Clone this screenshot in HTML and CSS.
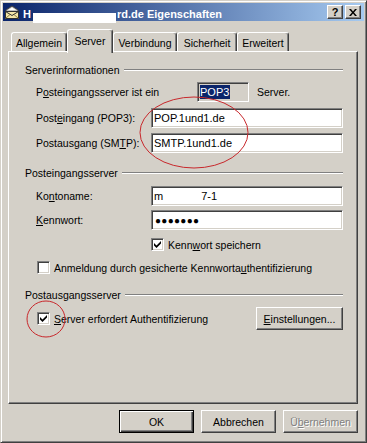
FILE: index.html
```html
<!DOCTYPE html>
<html lang="de">
<head>
<meta charset="utf-8">
<title>Eigenschaften</title>
<link rel="stylesheet" href="styles.css">
</head>
<body>
<div class="window">
  <div class="titlebar">
    <svg class="ticon" width="16" height="16" viewBox="0 0 16 16">
      <path d="M2 6 L8 2 L14 6 L14 8 L2 8 Z" fill="#c0c0c0" stroke="#404040" stroke-width="1"/>
      <path d="M4 6 L8 3.5 L12 6 Z" fill="#ffffff"/>
      <rect x="1.5" y="7.5" width="13" height="7" fill="#f4e7a8" stroke="#303030"/>
      <path d="M1.5 7.5 L8 11.5 L14.5 7.5" fill="none" stroke="#303030"/>
      <path d="M1.5 14.5 L6 10.5 M14.5 14.5 L10 10.5" fill="none" stroke="#8a7a40"/>
    </svg>
    <span class="title">H<span class="redact"></span>rd.de Eigenschaften</span>
    <div class="tbtns">
      <span class="tbtn help">?</span>
      <span class="tbtn close">
        <svg width="8" height="7" viewBox="0 0 8 7"><path d="M0 0h2l2 2.5L6 0h2L5 3.5 8 7H6L4 4.5 2 7H0l3-3.5z" fill="#000"/></svg>
      </span>
    </div>
  </div>

  <div class="tabs">
    <div class="tab w-allg">Allgemein</div>
    <div class="tab sel w-serv">Server</div>
    <div class="tab w-verb">Verbindung</div>
    <div class="tab w-sich">Sicherheit</div>
    <div class="tab w-erw">Erweitert</div>
  </div>

  <div class="panel">
    <div class="legend"><span>Serverinformationen</span><span class="rule"></span></div>
    <div class="row r1">
      <span class="lbl wide">P<u>o</u>steingangsserver ist ein</span>
      <span class="rofield"><span class="selected">POP3</span></span>
      <span class="after">Server.</span>
    </div>
    <div class="row r2">
      <span class="lbl">Post<u>e</u>ingang (POP3):</span>
      <span class="field">POP.1und1.de</span>
    </div>
    <div class="row r3">
      <span class="lbl">Postausgang (SM<u>T</u>P):</span>
      <span class="field">SMTP.1und1.de</span>
    </div>

    <div class="legend l2"><span>Posteingangsserver</span><span class="rule"></span></div>
    <div class="row r4">
      <span class="lbl">Ko<u>n</u>toname:</span>
      <span class="field"><span>m</span><span class="acct-tail">7-1</span></span>
    </div>
    <div class="row r5">
      <span class="lbl"><u>K</u>ennwort:</span>
      <span class="field pw">●●●●●●●</span>
    </div>
    <div class="crow r6 indent">
      <span class="cb checked"><svg width="7" height="7" viewBox="0 0 7 7"><path d="M0 2 L0 4.5 L2.5 7 L7 2.5 L7 0 L2.5 4.5 Z" fill="#000"/></svg></span>
      <span>Kenn<u>w</u>ort speichern</span>
    </div>
    <div class="crow r7 left">
      <span class="cb"></span>
      <span>Anmeldung durch gesicherte Kennworta<u>u</u>thentifizierung</span>
    </div>

    <div class="legend l3"><span>Postausgangsserver</span><span class="rule"></span></div>
    <div class="row r8 left">
      <span class="cb checked"><svg width="7" height="7" viewBox="0 0 7 7"><path d="M0 2 L0 4.5 L2.5 7 L7 2.5 L7 0 L2.5 4.5 Z" fill="#000"/></svg></span>
      <span class="ctext"><u>S</u>erver erfordert Authentifizierung</span>
      <span class="btn einst"><u>E</u>instellungen...</span>
    </div>
  </div>

  <div class="buttons">
    <span class="btn default">OK</span>
    <span class="btn">Abbrechen</span>
    <span class="btn disabled">Ü<u>b</u>ernehmen</span>
  </div>

  <svg class="annot" width="367" height="443" viewBox="0 0 367 443">
    <ellipse cx="194" cy="132.5" rx="54" ry="35.5" fill="none" stroke="#c8282c" stroke-width="1"/>
    <ellipse cx="46" cy="319" rx="19" ry="18" fill="none" stroke="#c8282c" stroke-width="1"/>
  </svg>
</div>
</body>
</html>
```

FILE: styles.css
```css
* { box-sizing: border-box; }
html, body { margin: 0; padding: 0; }
body {
  width: 367px;
  height: 443px;
  overflow: hidden;
  background: #d4d0c8;
  font-family: "Liberation Sans", Arial, sans-serif;
  font-size: 10.5px;
  color: #000;
}
u { text-decoration: underline; text-underline-offset: 1px; }

.window {
  position: relative;
  width: 367px;
  height: 443px;
  background: #d4d0c8;
  border: 1px solid;
  border-color: #d4d0c8 #404040 #404040 #d4d0c8;
  box-shadow: inset 1px 1px #ffffff, inset -1px -1px #808080;
  padding: 2px 8px 0 2px;
  display: flex;
  flex-direction: column;
}

/* title bar */
.titlebar {
  height: 18px;
  margin-right: -6px;
  background: linear-gradient(to right, #0a246a, #a6caf0);
  display: flex;
  align-items: center;
  padding-left: 1px;
  color: #fff;
}
.ticon { flex: none; }
.title {
  margin-left: 3px;
  font-weight: bold;
  font-size: 11px;
  white-space: nowrap;
  display: flex;
  align-items: flex-end;
  align-self: stretch;
  padding-top: 3px;
  line-height: 13px;
}
.redact {
  display: inline-block;
  width: 83px;
  height: 10px;
  background: #fff;
  margin-bottom: -2px;
  margin-left: 2px;
  margin-right: 1px;
}
.tbtns { margin-left: auto; display: flex; gap: 2px; margin-right: 3px; }
.tbtn {
  width: 16px;
  height: 14px;
  background: #d4d0c8;
  border: 1px solid;
  border-color: #fff #404040 #404040 #fff;
  box-shadow: inset -1px -1px #808080;
  color: #000;
  font-weight: bold;
  font-size: 11px;
  line-height: 12px;
  display: flex;
  align-items: center;
  justify-content: center;
}

/* tabs */
.tabs {
  margin-top: 8px;
  margin-left: 5px;
  padding-left: 3px;
  height: 22px;
  display: flex;
  align-items: flex-end;
  position: relative;
  z-index: 2;
}
.tab {
  height: 19px;
  border-top: 1px solid #fff;
  border-left: 1px solid #fff;
  border-right: 1px solid #404040;
  box-shadow: inset -1px 0 #808080;
  border-radius: 3px 3px 0 0;
  background: #d4d0c8;
  display: flex;
  align-items: center;
  justify-content: center;
  padding-top: 1px;
}
.tab.sel {
  height: 24px;
  margin-bottom: -2px;
  padding-bottom: 5px;
  padding-top: 3px;
}
.w-allg { width: 56px; }
.w-serv { width: 46px; }
.w-verb { width: 64px; }
.w-sich { width: 60px; }
.w-erw { width: 52px; }

/* panel */
.panel {
  margin-left: 5px;
  height: 353px;
  border: 1px solid;
  border-color: #fff #404040 #404040 #fff;
  box-shadow: inset -1px -1px #808080;
  padding: 11px 14px 0 16px;
  display: flex;
  flex-direction: column;
}
.legend {
  height: 14px;
  display: flex;
  align-items: center;
}
.rule {
  flex: 1;
  height: 2px;
  border-top: 1px solid #808080;
  border-bottom: 1px solid #fff;
  margin-left: 4px;
}
.l2 { margin-top: 13px; }
.l3 { margin-top: 14px; }

.row {
  display: flex;
  align-items: center;
  height: 20px;
  padding-left: 11px;
}
.r1 { margin-top: 5px; }
.r2 { margin-top: 6px; }
.r3 { margin-top: 5px; }
.r4 { margin-top: 6px; }
.r5 { margin-top: 4px; }
.lbl { width: 115px; flex: none; white-space: nowrap; }
.lbl.wide { width: 161px; }

.field, .rofield {
  height: 20px;
  background: #fff;
  border: 1px solid;
  border-color: #808080 #fff #fff #808080;
  box-shadow: inset 1px 1px #404040, inset -1px -1px #d4d0c8;
  padding: 0 0 0 2px;
  display: flex;
  align-items: center;
  white-space: nowrap;
  font-size: 11px;
}
.field { width: 192px; }
.rofield { width: 52px; background: #d4d0c8; height: 20px; }
.selected {
  background: #0a246a;
  color: #fff;
  padding: 1px 1px 0 0;
  line-height: 13px;
}
.after { margin-left: 8px; }
.acct-tail { margin-left: 38px; }
.pw { font-size: 10px; letter-spacing: 0.3px; padding-left: 3px; }

.crow {
  display: flex;
  align-items: center;
  height: 13px;
  gap: 4px;
  white-space: nowrap;
}
.crow.indent { padding-left: 126px; }
.crow.left, .row.left { padding-left: 12px; }
.r6 { margin-top: 8px; }
.r7 { margin-top: 10px; }

.cb {
  flex: none;
  width: 13px;
  height: 13px;
  background: #fff;
  border: 1px solid;
  border-color: #808080 #fff #fff #808080;
  box-shadow: inset 1px 1px #404040, inset -1px -1px #d4d0c8;
  display: flex;
  align-items: center;
  justify-content: center;
}
.cb svg { display: block; }

.r8 { height: 23px; margin-top: 5px; }
.ctext { margin-left: 4px; white-space: nowrap; }

.btn {
  width: 75px;
  height: 23px;
  flex: none;
  background: #d4d0c8;
  border: 1px solid;
  border-color: #fff #404040 #404040 #fff;
  box-shadow: inset -1px -1px #808080;
  display: flex;
  align-items: center;
  justify-content: center;
  white-space: nowrap;
}
.einst { width: 87px; margin-left: auto; }

.buttons {
  margin-top: 6px;
  display: flex;
  justify-content: flex-end;
  gap: 7px;
}
.btn.default {
  border: 1px solid #000;
  box-shadow: inset 1px 1px #fff, inset -1px -1px #404040, inset -2px -2px #808080;
}
.btn.disabled {
  color: #808080;
  text-shadow: 1px 1px #fff;
}

.annot {
  position: absolute;
  left: -1px;
  top: -1px;
  pointer-events: none;
}
```
